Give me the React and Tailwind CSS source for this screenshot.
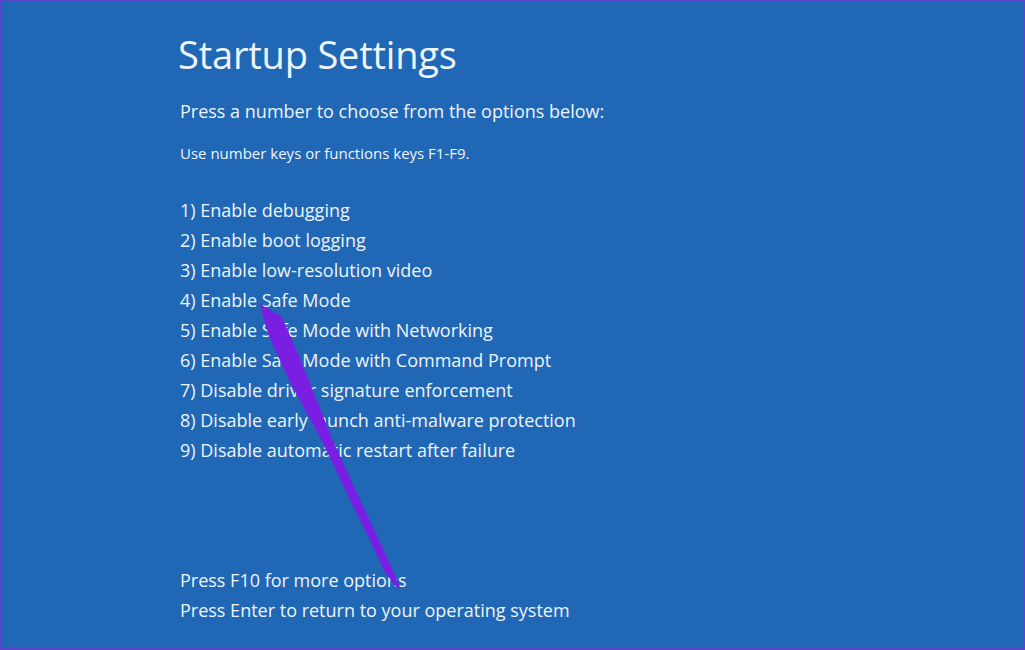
export default function App() {
  const items = [
    "1) Enable debugging",
    "2) Enable boot logging",
    "3) Enable low-resolution video",
    "4) Enable Safe Mode",
    "5) Enable Safe Mode with Networking",
    "6) Enable Safe Mode with Command Prompt",
    "7) Disable driver signature enforcement",
    "8) Disable early launch anti-malware protection",
    "9) Disable automatic restart after failure",
  ];
  return (
    <div
      className="relative w-[1025px] h-[650px] overflow-hidden bg-[#2067b5] border-l-2 border-r-2 border-t border-b-2 border-[#5a44cc] text-[#eef4fb]"
      style={{ fontFamily: '"Open Sans", "Noto Sans", sans-serif' }}
    >
      <div className="pl-[176px] pt-[27px] flex flex-col">
        <h1 className="text-[38px] leading-[52px] font-normal tracking-[-0.2px]">Startup Settings</h1>
        <p className="mt-[18px] text-[18px] leading-[26px] pl-[2px]">Press a number to choose from the options below:</p>
        <p className="mt-[20px] text-[15px] leading-[18px] pl-[2px]">Use number keys or functions keys F1-F9.</p>
        <ul className="mt-[33px] pl-[2px] flex flex-col">
          {items.map((t) => (
            <li key={t} className="text-[18px] leading-[30px]">{t}</li>
          ))}
        </ul>
        <div className="mt-[100px] pl-[2px] flex flex-col">
          <p className="text-[18px] leading-[30px]">Press F10 for more options</p>
          <p className="text-[18px] leading-[30px]">Press Enter to return to your operating system</p>
        </div>
      </div>
      <svg className="absolute left-0 top-0" width="1025" height="650" viewBox="0 0 1025 650">
        <polygon
          fill="#7a1ee3"
          points="258,303 280,316 297,355 331,440 360,503 376,537 391,570 398,586 395,587 382,570 367,537 350,503 320,440 290,385 276,355 267,335 261,316"
        />
      </svg>
    </div>
  );
}
